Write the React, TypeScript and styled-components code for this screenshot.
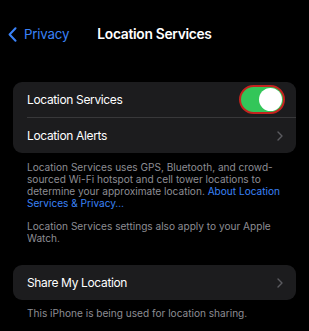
import styled, { createGlobalStyle } from 'styled-components'

const Global = createGlobalStyle`
  html, body {
    margin: 0;
    background: #000;
  }
  body {
    font-family: Inter, "Noto Sans", "Liberation Sans", sans-serif;
    -webkit-font-smoothing: antialiased;
  }
`

export default function App () {
  return (
    <>
      <Global />
      <Screen>
        <NavBar>
          <Back>
            <svg width='9' height='15' viewBox='0 0 9 15'>
              <path d='M7.5 1.2 L1.6 7.5 L7.5 13.8' fill='none' stroke='#3a82f7' strokeWidth='2' strokeLinecap='round' strokeLinejoin='round' />
            </svg>
            <span>Privacy</span>
          </Back>
          <Title>Location Services</Title>
          <span />
        </NavBar>

        <Group $top={26}>
          <Row>
            <Label>Location Services</Label>
            <Toggle><Knob /></Toggle>
          </Row>
          <Divider />
          <Row>
            <Label>Location Alerts</Label>
            <Chevron />
          </Row>
        </Group>

        <Footnote $top={8}>
          Location Services uses GPS, Bluetooth, and crowd-sourced Wi-Fi hotspot and cell tower locations to determine your approximate location. <Link>About Location</Link>{' '}
          <Link>Services &amp; Privacy…</Link>
        </Footnote>
        <Footnote $top={11}>
          Location Services settings also apply to your Apple Watch.
        </Footnote>

        <Group $top={21}>
          <Row>
            <Label>Share My Location</Label>
            <Chevron />
          </Row>
        </Group>
        <Footnote $top={7}>This iPhone is being used for location sharing.</Footnote>
      </Screen>
    </>
  )
}

function Chevron () {
  return (
    <ChevronIcon width='6' height='10' viewBox='0 0 6 10'>
      <path d='M1 1 L5 5 L1 9' fill='none' stroke='#5b5b60' strokeWidth='1.4' strokeLinecap='round' strokeLinejoin='round' />
    </ChevronIcon>
  )
}

const Screen = styled.div`
  width: 309px;
  height: 331px;
  overflow: hidden;
  padding: 12px 13px 0;
  box-sizing: border-box;
  background: #000;
`

const NavBar = styled.div`
  display: grid;
  grid-template-columns: 1fr auto 1fr;
  align-items: center;
  height: 44px;
  margin: 0 -13px;
  padding: 0 8px;
`

const Back = styled.div`
  display: flex;
  align-items: center;
  gap: 7px;
  color: #3a82f7;
  font-size: 13.3px;
  letter-spacing: -0.2px;
`

const Title = styled.div`
  color: #fff;
  font-size: 13.8px;
  font-weight: 600;
  letter-spacing: -0.3px;
`

const Group = styled.div<{ $top: number }>`
  margin-top: ${p => p.$top}px;
  background: #1c1c1e;
  border-radius: 9px;
  overflow: hidden;
`

const Row = styled.div`
  display: flex;
  align-items: center;
  justify-content: space-between;
  height: 35px;
  padding: 0 14px;
`

const Label = styled.span`
  color: #fff;
  font-size: 12px;
  letter-spacing: -0.35px;
`

const Divider = styled.div`
  height: 1px;
  margin-left: 14px;
  background: #38383a;
`

const Toggle = styled.div`
  display: flex;
  align-items: center;
  justify-content: flex-end;
  width: 46px;
  height: 29px;
  margin-right: -3px;
  box-sizing: border-box;
  border: 2px solid #c4231f;
  border-radius: 15px;
  background: #33c659;
  padding: 1px;
`

const Knob = styled.div`
  width: 23px;
  height: 23px;
  border-radius: 50%;
  background: #fff;
`

const ChevronIcon = styled.svg`
  margin-right: -1px;
`

const Footnote = styled.p<{ $top: number }>`
  margin: ${p => p.$top}px 0 0;
  padding: 0 14px;
  color: #8d8d93;
  font-size: 10.1px;
  line-height: 12px;
`

const Link = styled.span`
  display: inline-block;
  color: #3a82f7;
`
